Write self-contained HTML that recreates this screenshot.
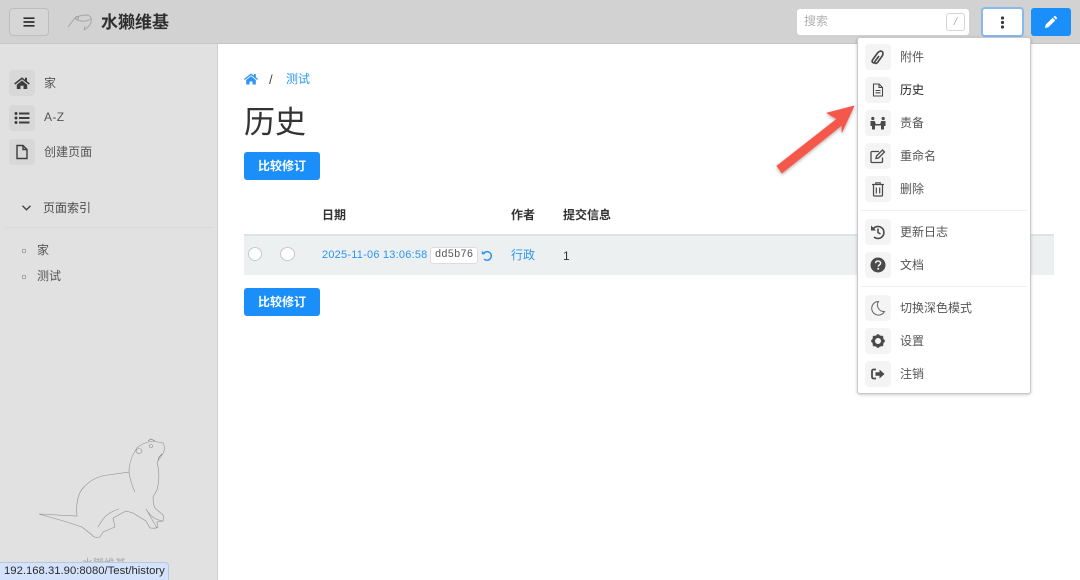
<!DOCTYPE html>
<html lang="zh"><head><meta charset="utf-8"><title>历史</title>
<style>
*{box-sizing:border-box}
html,body{margin:0;padding:0;width:1080px;height:580px;overflow:hidden;background:#fff}
body{font-family:"Liberation Sans","Noto Sans CJK SC",sans-serif;color:#333;position:relative}
.a{position:absolute;white-space:nowrap;line-height:1}
svg{display:block;overflow:visible}
.blue{color:#2d94f2}
.box{position:absolute;width:26px;height:26px;border-radius:4px}
.sb{background:#d8d8d8}
.mb{background:#f4f4f4}
.box svg{position:absolute;left:5px;top:5px}
.btn{position:absolute;left:244px;width:76px;height:28px;background:#1a8ffa;border-radius:3px;color:#fff;font-size:12px;font-weight:700;text-align:center;line-height:29px}
.m{position:absolute;left:42px;font-size:12px;line-height:1;color:#555;white-space:nowrap}
</style></head><body>
<!-- header -->
<div class="a" style="left:0;top:0;width:1080px;height:44px;background:#d2d2d2;border-bottom:1px solid #c6c6c6"></div>
<div class="a" style="left:9px;top:8px;width:40px;height:28px;border:1px solid #bdbdbd;border-radius:4px;background:#d6d6d6"></div>
<svg class="a" style="left:23px;top:17px" width="12" height="10"><path d="M.5 1.200h11M.5 5h11M.5 8.800h11" stroke="#2f2f2f" stroke-width="1.700"/></svg>
<svg class="a" style="left:66px;top:12px" width="30" height="22" fill="none" stroke="#a3a3a3" stroke-width=".9"><path d="M2 15 9 6C13 3 19 3 22 3c4 2 5 7 0 12l-4 3M9 6c3 4 11 4 16 1M19 14l-1 4"/><circle cx="11" cy="6" r="1.500"/></svg>
<div class="a" style="left:101px;top:14px;font-size:17px;font-weight:700;color:#2f2f2f">水獭维基</div>
<div class="a" style="left:797px;top:9px;width:172px;height:26px;background:#fff;border-radius:3px"></div>
<div class="a" style="left:804px;top:15px;font-size:12px;color:#b0b0b0">搜索</div>
<div class="a" style="left:946px;top:13px;width:19px;height:18px;border:1px solid #d4d4d4;border-radius:3px;font-size:11px;color:#aaa;text-align:center;line-height:16px;font-style:italic">/</div>
<div class="a" style="left:981px;top:7px;width:43px;height:30px;background:#fff;border:2px solid #89b8ec;border-radius:4px"></div>
<svg class="a" style="left:1000px;top:16px" width="5" height="13" fill="#3a3a3a"><circle cx="2.500" cy="2" r="1.600"/><circle cx="2.500" cy="6.500" r="1.600"/><circle cx="2.500" cy="11" r="1.600"/></svg>
<div class="a" style="left:1031px;top:8px;width:40px;height:28px;background:#1a8ffa;border-radius:3px"></div>
<svg class="a" style="left:1045px;top:16px" width="12" height="12" fill="#fff"><path d="M0 12l.7-3.400L7.600 1.700l2.700 2.700-6.900 6.900zM8.400 1l.8-.7c.4-.4 1-.4 1.400 0l1.100 1.100c.4.4.4 1 0 1.400l-.7.8z"/></svg>

<!-- sidebar -->
<div class="a" style="left:0;top:44px;width:218px;height:536px;background:#e1e1e1;border-right:1px solid #cfcfcf"></div>
<div class="box sb" style="left:9px;top:70px"><svg width="16" height="16" viewBox="0 0 16 16" fill="#3d3d3d"><path d="M8 2.200.2 8.400l1 1.200L8 4.200l6.800 5.400 1-1.200-2.800-2.200V2.700h-2v2.100zM2.800 9.700V14h3.700v-3.300h3V14h3.700V9.700L8 5.500z"/></svg></div>
<div class="a" style="left:44px;top:77px;font-size:12px;color:#555">家</div>
<div class="box sb" style="left:9px;top:105px"><svg width="16" height="16" viewBox="0 0 16 16" fill="#3d3d3d"><path d="M5 2.500h10.500v2H5zM5 7h10.500v2H5zM5 11.500h10.500v2H5z"/><circle cx="2" cy="3.500" r="1.500"/><circle cx="2" cy="8" r="1.500"/><circle cx="2" cy="12.500" r="1.500"/></svg></div>
<div class="a" style="left:44px;top:111px;font-size:12px;color:#555;letter-spacing:.4px">A-Z</div>
<div class="box sb" style="left:9px;top:139px"><svg width="16" height="16" viewBox="0 0 16 16" fill="none" stroke="#3d3d3d" stroke-width="1.400"><path d="M3 1.500h6l4 4v9H3zM9 1.500v4h4"/></svg></div>
<div class="a" style="left:44px;top:146px;font-size:12px;color:#555;letter-spacing:.05px">创建页面</div>
<svg class="a" style="left:22px;top:205px" width="9" height="6" fill="none" stroke="#444" stroke-width="1.400"><path d="M.5.800 4.500 4.800 8.500.800"/></svg>
<div class="a" style="left:43px;top:202px;font-size:12px;color:#4d4d4d">页面索引</div>
<div class="a" style="left:5px;top:227px;width:208px;height:1px;background:#d9d9d9"></div>
<div class="a" style="left:22px;top:249px;width:4px;height:4px;border:1px solid #aaa"></div>
<div class="a" style="left:37px;top:244px;font-size:12px;color:#555">家</div>
<div class="a" style="left:22px;top:275px;width:4px;height:4px;border:1px solid #aaa"></div>
<div class="a" style="left:37px;top:270px;font-size:12px;color:#555">测试</div>
<svg class="a" style="left:0;top:420px" width="218" height="160" fill="none" stroke="#8f8f8f" stroke-width=".6"><path d="M39 94 77 96C76 85 77 75 83 68 90 60 98 56 108 55L129 52C129 44 131 37 137 28 141 24 147 22 153 21L163 23C165 26 165 31 162 35L157 42C159 50 160 58 157 70L153 77C153 82 154 86 155 88L163 95C164 98 164 100 163 101L157 102 158 107C156 109 152 108 150 108L146 101 133 93 126 91 113 98 115 107 103 112 100 117C96 118 93 117 92 115L82 107 67 102Z"/><path d="M98 107C101 102 103 98 107 95S115 90 119 89M129 52C130 59 132 66 135 72M146 89 157 108M146 89C150 96 155 100 163 101"/><ellipse cx="139" cy="31" rx="3" ry="2.500"/><ellipse cx="151" cy="26" rx="1.800" ry="1.500"/><path d="M148 21l3-2 4 2M162 34l-3 3-1 4" stroke="#777"/></svg>
<div class="a" style="left:82px;top:559px;font-size:11px;color:#aaa">水獭维基</div>
<div class="a" style="left:0;top:562px;width:169px;height:18px;background:#d4e3fb;border:1px solid #b9c7dd;border-left:0;border-bottom:0;border-top-right-radius:4px;font-size:11.300px;line-height:17px;padding-left:4px;color:#2b2b2b">192.168.31.90:8080/Test/history</div>

<!-- main -->
<svg class="a" style="left:244px;top:73px" width="14" height="12" viewBox="0 0 14 12" fill="#2d94f2"><path d="M7 .5 0 6l.8 1L7 2.200 13.200 7l.8-1-2.200-1.800V1h-1.800v1.700zM2.200 7v4.500h3.300V8.500h3v3h3.300V7L7 3.200z"/></svg>
<div class="a" style="left:269px;top:73px;font-size:13px;color:#444">/</div>
<div class="a blue" style="left:286px;top:73px;font-size:12px">测试</div>
<div class="a" style="left:244px;top:107px;font-size:31px;color:#333">历史</div>
<div class="btn" style="top:152px">比较修订</div>
<div class="a" style="left:322px;top:209px;font-size:12px;font-weight:700">日期</div>
<div class="a" style="left:511px;top:209px;font-size:12px;font-weight:700">作者</div>
<div class="a" style="left:563px;top:209px;font-size:12px;font-weight:700">提交信息</div>
<div class="a" style="left:244px;top:234px;width:810px;height:41px;background:#ecf0f1;border-top:2px solid #dfe3e5"></div>
<div class="a" style="left:248px;top:247px;width:14px;height:14px;border-radius:50%;background:#fff;border:1px solid #c9c9c9"></div>
<div class="a" style="left:280px;top:247px;width:15px;height:14px;border-radius:50%;background:#fff;border:1px solid #c9c9c9"></div>
<div class="a blue" style="left:322px;top:250px;font-size:11px;letter-spacing:.22px">2025-11-06 13:06:58</div>
<div class="a" style="left:430px;top:247px;width:48px;height:17px;background:#fff;border:1px solid #dcdcdc;border-radius:3px;font-family:'Liberation Mono',monospace;font-size:10.600px;line-height:15px;text-align:center;color:#555">dd5b76</div>
<svg class="a" style="left:481px;top:250px" width="11" height="11" fill="none" stroke="#2d94f2" stroke-width="1.500"><path d="M2.500 3.500A4.300 4.300 0 1 1 3 9"/><path d="M.8.800v3.500h3.500" fill="#2d94f2" stroke="none"/></svg>
<div class="a blue" style="left:511px;top:249px;font-size:12px">行政</div>
<div class="a" style="left:563px;top:250px;font-size:12px">1</div>
<div class="btn" style="top:288px">比较修订</div>

<!-- arrow -->
<svg class="a" style="left:775px;top:100px" width="85" height="80"><defs><filter id="s" x="-20%" y="-20%" width="140%" height="140%"><feDropShadow dx="0" dy="1.500" stdDeviation="1.500" flood-color="#000" flood-opacity=".3"/></filter></defs><path d="M79 6 52 13 62 19 2 66 7 73 67 25 67 32z" fill="#f5594c" stroke="#f5594c" stroke-width=".8" stroke-linejoin="round" filter="url(#s)"/></svg>

<!-- menu -->
<div class="a" style="left:857px;top:37px;width:174px;height:357px;background:#fff;border:1px solid #c8c8c8;border-radius:3px;box-shadow:0 1px 3px rgba(0,0,0,.2)">
<div class="box mb" style="left:7px;top:6px"><svg width="16" height="16" viewBox="0 0 16 16" fill="none" stroke="#4a4a4a" stroke-width="1.700"><path d="M5 13.500c-2 1.200-3.500-.8-2.500-2.500l5-7c1.500-2 4-2.500 5-1 1 1.200.5 3-1 5l-4 5.500c-1 1.200-2 1-2.500.5-.5-.5-.3-1.300.3-2l3.700-5"/></svg></div>
<div class="m" style="top:13px">附件</div>
<div class="box mb" style="left:7px;top:39px"><svg width="16" height="16" viewBox="0 0 16 16" fill="none" stroke="#4a4a4a" stroke-width="1.100"><path d="M3.500 2h5.500l3.500 3.500v8.500h-9zM9 2v3.500h3.500M5.500 8.500h5M5.500 10.800h5"/></svg></div>
<div class="m" style="top:46px;color:#222">历史</div>
<div class="box mb" style="left:7px;top:72px"><svg width="16" height="16" viewBox="0 0 16 16" fill="#4a4a4a"><circle cx="2.800" cy="3.500" r="1.600"/><circle cx="13.200" cy="3.500" r="1.600"/><path d="M.5 6h4.300l1 3H10.200l1-3h4.300v5h-1.500v3.500h-3V10.500H5v4H2V11H.5z"/></svg></div>
<div class="m" style="top:79px">责备</div>
<div class="box mb" style="left:7px;top:105px"><svg width="16" height="16" viewBox="0 0 16 16" fill="none" stroke="#4a4a4a" stroke-width="1.300"><path d="M12.500 9.500v4a1 1 0 0 1-1 1H2a1 1 0 0 1-1-1V4.500a1 1 0 0 1 1-1h7"/><path d="M6 10.500l.5-2.500 6-6 2 2-6 6z"/></svg></div>
<div class="m" style="top:112px">重命名</div>
<div class="box mb" style="left:7px;top:138px"><svg width="16" height="16" viewBox="0 0 16 16" fill="none" stroke="#4a4a4a" stroke-width="1.200"><path d="M2 3.500h12M5.800 3.500V1.800h4.400v1.700M3.500 3.500V14a1 1 0 0 0 1 1h7a1 1 0 0 0 1-1V3.500M6.300 6.500v6M9.700 6.500v6"/></svg></div>
<div class="m" style="top:145px">删除</div>
<div class="a" style="left:3px;top:172px;width:166px;height:1px;background:#f0f0f0"></div>
<div class="box mb" style="left:7px;top:181px"><svg width="16" height="16" viewBox="0 0 16 16" fill="none" stroke="#4a4a4a" stroke-width="1.600"><path d="M3 5A6 6 0 1 1 4 13"/><path d="M8 4.500v4l2.500 1.500"/><path d="M1 1.500v5h5z" fill="#4a4a4a" stroke="none"/></svg></div>
<div class="m" style="top:188px">更新日志</div>
<div class="box mb" style="left:7px;top:214px"><svg width="16" height="16" viewBox="0 0 16 16"><circle cx="8" cy="8" r="7.500" fill="#4a4a4a"/><path d="M5.500 6.200C5.700 4.700 6.800 4 8 4c1.500 0 2.600.9 2.600 2.100 0 1.900-2.300 1.900-2.300 3.500" fill="none" stroke="#f4f4f4" stroke-width="1.500"/><circle cx="8.200" cy="11.800" r="1" fill="#f4f4f4"/></svg></div>
<div class="m" style="top:221px">文档</div>
<div class="a" style="left:3px;top:248px;width:166px;height:1px;background:#f0f0f0"></div>
<div class="box mb" style="left:7px;top:257px"><svg width="16" height="16" viewBox="0 0 16 16" fill="none" stroke="#666" stroke-width="1"><path d="M8.500 1.500a6.800 6.800 0 1 0 6 10 6.500 6.500 0 0 1-6-10z"/></svg></div>
<div class="m" style="top:264px">切换深色模式</div>
<div class="box mb" style="left:7px;top:290px"><svg width="16" height="16" viewBox="0 0 16 16"><circle cx="8" cy="8" r="4.500" fill="none" stroke="#4a4a4a" stroke-width="3"/><path d="M8 1.200v3M8 11.800v3M1.200 8h3M11.800 8h3M3.200 3.200l2 2M10.800 10.800l2 2M12.800 3.200l-2 2M5.200 10.800l-2 2" stroke="#4a4a4a" stroke-width="2.400"/></svg></div>
<div class="m" style="top:297px">设置</div>
<div class="box mb" style="left:7px;top:323px"><svg width="16" height="16" viewBox="0 0 16 16" fill="#4a4a4a"><path d="M6 3.500H3.500A1.500 1.500 0 0 0 2 5v6a1.500 1.500 0 0 0 1.500 1.500H6" fill="none" stroke="#4a4a4a" stroke-width="1.800"/><path d="M5.500 6.200h4V3.500l5 4.500-5 4.500V9.800h-4z"/></svg></div>
<div class="m" style="top:330px">注销</div>
</div>
</body></html>
